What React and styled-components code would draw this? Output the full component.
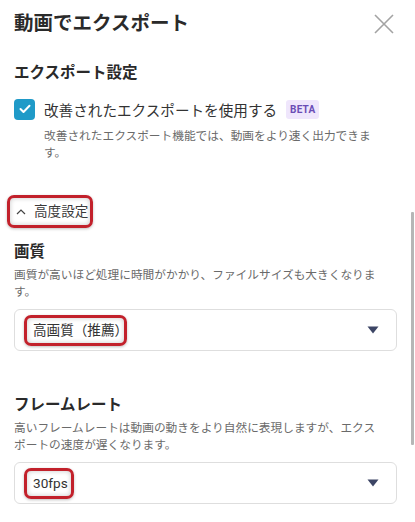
import React, { useState } from "react";
import styled, { createGlobalStyle } from "styled-components";

const GlobalStyle = createGlobalStyle`
  html, body {
    margin: 0;
    padding: 0;
    background: #ffffff;
  }
  body {
    font-family: "Roboto", "Noto Sans CJK JP", sans-serif;
    color: #2b2b2b;
  }
`;

export default function App() {
  const [improved, setImproved] = useState(true);
  const [open, setOpen] = useState(true);

  const fields = [
    {
      label: "画質",
      note: "画質が高いほど処理に時間がかかり、ファイルサイズも大きくなります。",
      value: "高画質（推薦）",
      trim: true,
      gap: 0
    },
    {
      label: "フレームレート",
      note: "高いフレームレートは動画の動きをより自然に表現しますが、エクスポートの速度が遅くなります。",
      value: "30fps",
      trim: false,
      gap: 43
    }
  ];

  return (
    <Panel>
      <GlobalStyle />
      <Header>
        <Title>動画でエクスポート</Title>
        <CloseButton aria-label="close">
          <svg width="20" height="20" viewBox="0 0 20 20">
            <path d="M1 1 L19 19 M19 1 L1 19" stroke="#a3a3a3" strokeWidth="1.6" fill="none" />
          </svg>
        </CloseButton>
      </Header>

      <SectionTitle>エクスポート設定</SectionTitle>
      <CheckRow onClick={() => setImproved(!improved)}>
        <CheckBox $checked={improved}>
          {improved && (
            <svg width="12" height="10" viewBox="0 0 12 10">
              <path d="M1.5 5 L4.5 8 L10.5 1.8" stroke="#fff" strokeWidth="2" fill="none" strokeLinecap="round" strokeLinejoin="round" />
            </svg>
          )}
        </CheckBox>
        <CheckLabel>改善されたエクスポートを使用する</CheckLabel>
        <Badge>BETA</Badge>
      </CheckRow>
      <Note $indent={30} $top={8}>
        改善されたエクスポート機能では、動画をより速く出力できます。
      </Note>

      <Toggle onClick={() => setOpen(!open)}>
        <Highlight $pad="2px 2px 2px 3px">
          <Chevron viewBox="0 0 10 6" $open={open}>
            <path d="M1 5 L5 1 L9 5" stroke="#444" strokeWidth="1.2" fill="none" />
          </Chevron>
          <ToggleText>高度設定</ToggleText>
        </Highlight>
      </Toggle>

      {open &&
        fields.map((f) => (
          <Field key={f.label} $gap={f.gap}>
            <FieldLabel>{f.label}</FieldLabel>
            <Note $indent={0} $top={4}>{f.note}</Note>
            <Select>
              <Highlight $pad="1px 3px 1px 6px">
                <SelectValue $trim={f.trim}>{f.value}</SelectValue>
              </Highlight>
              <Caret viewBox="0 0 12 8">
                <path d="M0.5 0.5 L11.5 0.5 L6 7.5 Z" fill="#3c4565" />
              </Caret>
            </Select>
          </Field>
        ))}

      <ScrollThumb />
    </Panel>
  );
}

const Panel = styled.div`
  position: relative;
  width: 415px;
  height: 522px;
  box-sizing: border-box;
  padding: 0 18px 0 14px;
  overflow: hidden;
  background: #fff;
`;

const Header = styled.div`
  display: flex;
  align-items: center;
  justify-content: space-between;
  height: 48px;
`;

const Title = styled.h1`
  margin: 0;
  font-size: 19.5px;
  font-weight: 700;
  line-height: 26px;
  color: #2a2a2a;
`;

const CloseButton = styled.button`
  display: flex;
  padding: 0;
  margin-right: 3px;
  border: none;
  background: none;
  cursor: pointer;
`;

const SectionTitle = styled.h2`
  margin: 14px 0 0;
  font-size: 15.5px;
  font-weight: 700;
  line-height: 22px;
  color: #2a2a2a;
`;

const CheckRow = styled.div`
  display: flex;
  align-items: center;
  height: 22px;
  margin-top: 14px;
  cursor: pointer;
`;

const CheckBox = styled.span`
  display: flex;
  align-items: center;
  justify-content: center;
  width: 21px;
  height: 21px;
  border-radius: 4px;
  background: ${(p) => (p.$checked ? "#1f9ac8" : "#fff")};
  border: ${(p) => (p.$checked ? "none" : "1px solid #999")};
  box-sizing: border-box;
`;

const CheckLabel = styled.span`
  margin-left: 9px;
  font-size: 14.6px;
  color: #333;
`;

const Badge = styled.span`
  margin-left: 9px;
  padding: 0 4px;
  height: 19px;
  line-height: 19px;
  border-radius: 3px;
  background: #efe6fc;
  color: #6a4db5;
  font-size: 10px;
  font-weight: 700;
  letter-spacing: 0.2px;
`;

const Note = styled.p`
  margin: ${(p) => p.$top}px 0 0 ${(p) => p.$indent}px;
  padding-right: 14px;
  font-size: 11.7px;
  line-height: 17px;
  color: #6a6a6a;
`;

const Toggle = styled.div`
  display: flex;
  margin: 33px 0 0 -7px;
  cursor: pointer;
`;

const Highlight = styled.span`
  display: inline-flex;
  align-items: center;
  padding: ${(p) => p.$pad};
  border: 3px solid #c2212b;
  border-radius: 7px;
  box-shadow: inset 0 0 5px rgba(0, 0, 0, 0.22), 0 1px 3px rgba(0, 0, 0, 0.25);
`;

const Chevron = styled.svg`
  width: 10px;
  height: 6px;
  margin-left: 3px;
  transform: ${(p) => (p.$open ? "none" : "rotate(180deg)")};
`;

const ToggleText = styled.span`
  margin-left: 8px;
  font-size: 13.6px;
  line-height: 23px;
  color: #3a3a3a;
`;

const Field = styled.div`
  margin-top: ${(p) => (p.$gap ? p.$gap : 13)}px;
`;

const FieldLabel = styled.h3`
  margin: 0;
  font-size: 15.5px;
  font-weight: 700;
  line-height: 22px;
  color: #2a2a2a;
`;

const Select = styled.div`
  display: flex;
  align-items: center;
  justify-content: space-between;
  height: 42px;
  margin-top: 8px;
  padding: 0 17px 0 9px;
  box-sizing: border-box;
  border: 1px solid #dedede;
  border-radius: 6px;
  cursor: pointer;
`;

const SelectValue = styled.span`
  font-size: 13.6px;
  line-height: 23px;
  color: #333;
  margin-right: ${(p) => (p.$trim ? "-7px" : "0")};
`;

const Caret = styled.svg`
  width: 12px;
  height: 8px;
`;

const ScrollThumb = styled.div`
  position: absolute;
  right: 1px;
  top: 212px;
  width: 3px;
  height: 233px;
  background: #b6b6b6;
  border-radius: 1px;
`;
